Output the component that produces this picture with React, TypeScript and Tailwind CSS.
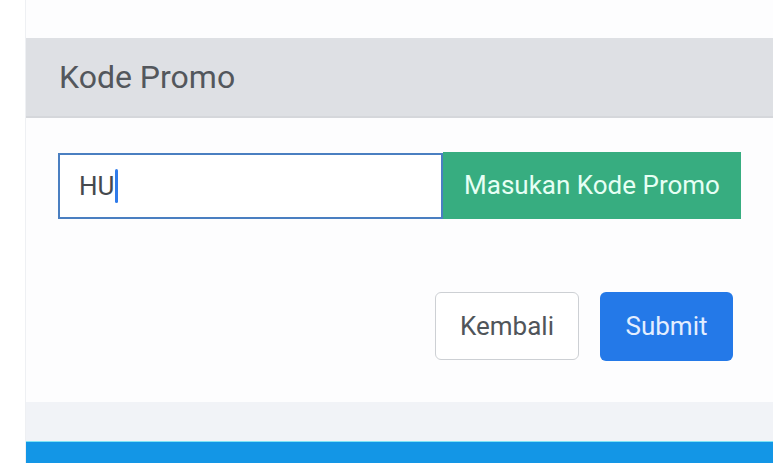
export default function App() {
  return (
    <div
      className="flex h-[463px] w-[775px] overflow-hidden bg-white pl-[25px] pr-[2px]"
      style={{ fontFamily: "Roboto, 'Liberation Sans', sans-serif" }}
    >
      <div className="flex flex-1 flex-col border-l border-[#eef0f3] bg-[#fdfdfe]">
        <div className="h-[38px] shrink-0" />

        <div className="flex h-[80px] shrink-0 items-center border-b-2 border-[#d5d7db] bg-[#dee0e4] px-[33px]">
          <h2 className="text-[32px] leading-none text-[#53575c]">Kode Promo</h2>
        </div>

        <div className="flex flex-1 flex-col px-[32px] pt-[34px]">
          <div className="flex items-center">
            <div className="flex h-[66px] w-[385px] items-center border-2 border-[#4a7fc1] bg-white px-[19px]">
              <span className="text-[26px] leading-none text-[#45494e]">HU</span>
              <span className="ml-[1px] h-[34px] w-[3px] rounded-full bg-[#2f7bea]" />
            </div>
            <button className="h-[67px] flex-1 bg-[#37ad80] text-[26px] text-[#e6fff4]">
              Masukan Kode Promo
            </button>
          </div>

          <div className="mt-[73px] flex justify-end gap-[21px] pr-[8px]">
            <button className="h-[68px] w-[144px] rounded-[6px] border border-[#cdd0d4] bg-white text-[26px] text-[#50555a]">
              Kembali
            </button>
            <button className="h-[69px] w-[133px] rounded-[6px] bg-[#2479e8] text-[26px] text-[#e3eeff]">
              Submit
            </button>
          </div>
        </div>

        <div className="h-[39px] shrink-0 bg-[#f1f3f7]" />
        <div className="h-[22px] shrink-0 border-t border-[#7fe3f5] bg-[#1396e6]" />
      </div>
    </div>
  );
}
